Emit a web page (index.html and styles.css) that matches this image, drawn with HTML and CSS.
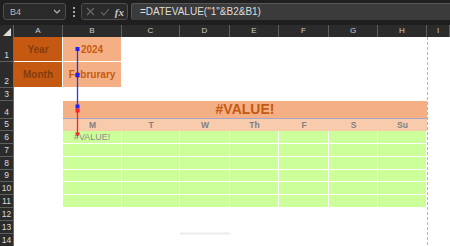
FILE: index.html
```html
<!DOCTYPE html>
<html lang="en">
<head>
    <meta charset="UTF-8">
    <meta name="viewport" content="width=device-width, initial-scale=1.0">
    <title>Calendar sheet</title>
    <link rel="stylesheet" href="styles.css">
</head>
<body>
    <div class="toolbar">
        <div class="name-box">
            <span>B4</span>
            <svg class="chevron" width="8" height="5" viewBox="0 0 8 5"><path d="M1 1 L4 4 L7 1" fill="none" stroke="#b8b8b8" stroke-width="1.1"/></svg>
        </div>
        <div class="grip"><i></i><i></i><i></i></div>
        <div class="fx-box">
            <svg width="9" height="9" viewBox="0 0 9 9"><path d="M1 1 L8 8 M8 1 L1 8" stroke="#6c6c6c" stroke-width="1.1"/></svg>
            <svg width="10" height="8" viewBox="0 0 10 8"><path d="M1 4.2 L3.8 7 L9 1" fill="none" stroke="#6c6c6c" stroke-width="1.1"/></svg>
            <span class="fx">fx</span>
        </div>
        <div class="formula">=DATEVALUE("1"&amp;B2&amp;B1)</div>
    </div>

    <div class="sheet">
        <div class="row head">
            <div class="corner"><svg width="8" height="8" viewBox="0 0 8 8"><path d="M8 0 L8 8 L0 8 Z" fill="#dcdcdc"/></svg></div>
            <div class="ch">A</div>
            <div class="ch">B</div>
            <div class="ch">C</div>
            <div class="ch">D</div>
            <div class="ch">E</div>
            <div class="ch">F</div>
            <div class="ch">G</div>
            <div class="ch">H</div>
            <div class="ch">I</div>
        </div>
        <div class="row r1">
            <div class="rh">1</div>
            <div class="cell label">Year</div>
            <div class="cell value">2024</div>
        </div>
        <div class="row r2">
            <div class="rh">2</div>
            <div class="cell label">Month</div>
            <div class="cell value">Februrary</div>
        </div>
        <div class="row r3">
            <div class="rh">3</div>
        </div>
        <div class="row r4">
            <div class="rh">4</div>
            <div></div>
            <div class="title">#VALUE!</div>
        </div>
        <div class="row r5">
            <div class="rh">5</div>
            <div></div>
            <div class="day">M</div>
            <div class="day">T</div>
            <div class="day">W</div>
            <div class="day">Th</div>
            <div class="day">F</div>
            <div class="day">S</div>
            <div class="day">Su</div>
        </div>
        <div class="row r6">
            <div class="rh">6</div>
            <div></div>
            <div class="g err">#VALUE!</div><div class="g"></div><div class="g"></div><div class="g"></div><div class="g"></div><div class="g"></div><div class="g"></div>
        </div>
        <div class="row r7">
            <div class="rh">7</div>
            <div></div>
            <div class="g"></div><div class="g"></div><div class="g"></div><div class="g"></div><div class="g"></div><div class="g"></div><div class="g"></div>
        </div>
        <div class="row r8">
            <div class="rh">8</div>
            <div></div>
            <div class="g"></div><div class="g"></div><div class="g"></div><div class="g"></div><div class="g"></div><div class="g"></div><div class="g"></div>
        </div>
        <div class="row r9">
            <div class="rh">9</div>
            <div></div>
            <div class="g"></div><div class="g"></div><div class="g"></div><div class="g"></div><div class="g"></div><div class="g"></div><div class="g"></div>
        </div>
        <div class="row r10">
            <div class="rh">10</div>
            <div></div>
            <div class="g"></div><div class="g"></div><div class="g"></div><div class="g"></div><div class="g"></div><div class="g"></div><div class="g"></div>
        </div>
        <div class="row r11">
            <div class="rh">11</div>
            <div></div>
            <div class="g"></div><div class="g"></div><div class="g"></div><div class="g"></div><div class="g"></div><div class="g"></div><div class="g"></div>
        </div>
        <div class="row r12">
            <div class="rh">12</div>
        </div>
        <div class="row r13">
            <div class="rh">13</div>
        </div>
        <div class="row r14">
            <div class="rh">14</div>
        </div>

        <!-- trace arrows and page break drawn over the grid -->
        <svg class="overlay" width="450" height="222" viewBox="0 0 450 222">
            <line x1="427.5" y1="12" x2="427.5" y2="222" stroke="#b4b4b4" stroke-width="1" stroke-dasharray="3 2"/>
            <line x1="180" y1="208.5" x2="230" y2="208.5" stroke="#ececec" stroke-width="2"/>
            <line x1="77.5" y1="24" x2="77.5" y2="82" stroke="#3030ff" stroke-width="1.3"/>
            <rect x="75.5" y="22" width="4" height="4" fill="#2020ff"/>
            <rect x="75.5" y="48" width="4" height="4" fill="#2020ff"/>
            <rect x="75.5" y="79.5" width="4" height="4" fill="#2020ff"/>
            <line x1="77.5" y1="84" x2="77.5" y2="108" stroke="#ff2020" stroke-width="1.3"/>
            <rect x="75.5" y="83.5" width="4" height="4" fill="#ff2020"/>
            <path d="M75 107.5 L80 107.5 L77.5 112 Z" fill="#ff2020"/>
        </svg>
    </div>
</body>
</html>
```

FILE: styles.css
```css
* {
    box-sizing: border-box;
}

body {
    margin: 0;
    width: 450px;
    height: 246px;
    overflow: hidden;
    background: #ffffff;
    font-family: "Liberation Sans", Arial, sans-serif;
}

/* formula bar */
.toolbar {
    height: 25px;
    background: #1f1f1f;
    display: flex;
    align-items: flex-start;
    padding-top: 3px;
}

.name-box {
    margin-left: 3px;
    width: 63px;
    height: 17px;
    border: 1px solid #4e4e4e;
    border-radius: 3px;
    background: #2a2a2a;
    display: flex;
    align-items: center;
    justify-content: space-between;
    padding: 0 4px 0 6px;
    color: #b8b8b8;
    font-size: 9px;
}

.grip {
    width: 15px;
    height: 17px;
    display: flex;
    flex-direction: column;
    align-items: center;
    justify-content: center;
    gap: 2px;
}

.grip i {
    width: 2px;
    height: 2px;
    background: #a8a8a8;
}

.fx-box {
    width: 47px;
    height: 17px;
    border: 1px solid #4e4e4e;
    border-radius: 3px;
    background: #2a2a2a;
    display: flex;
    align-items: center;
    justify-content: space-between;
    padding: 0 3px 0 4px;
}

.fx {
    font-family: "Liberation Serif", serif;
    font-style: italic;
    font-weight: bold;
    font-size: 11px;
    color: #c8c8c8;
}

.formula {
    margin-left: 3px;
    flex: 1;
    height: 17px;
    background: #3b3b3b;
    border-top: 1px solid #575757;
    border-left: 1px solid #575757;
    border-radius: 3px 0 0 3px;
    color: #dedede;
    font-size: 10px;
    line-height: 15px;
    padding-left: 8px;
}

/* grid */
.sheet {
    position: relative;
}

.row {
    display: grid;
    grid-template-columns: 14px 49px 59px 58px 50px 49px 50px 49px 49px 23px;
}

.head { height: 12px; }
.r1 { height: 25px; }
.r2 { height: 26px; }
.r3 { height: 13px; }
.r4 { height: 18px; }
.r5 { height: 12px; }
.r6, .r7, .r8, .r10, .r11, .r12, .r13, .r14 { height: 13px; }
.r9 { height: 12px; }

.corner {
    background: #2b2b2b;
    border-right: 1px solid #5e5e5e;
    display: flex;
    align-items: flex-end;
    justify-content: flex-end;
    padding: 0 2px 1px 0;
}

.ch {
    background: #2b2b2b;
    color: #cdcdcd;
    border-right: 1px solid #5e5e5e;
    font-size: 8px;
    line-height: 12px;
    text-align: center;
}

.rh {
    background: #2b2b2b;
    color: #dcdcdc;
    border-bottom: 1px solid #5e5e5e;
    border-right: 1px solid #6a6a6a;
    font-size: 8.5px;
    display: flex;
    align-items: flex-end;
    justify-content: center;
    padding-bottom: 1px;
}

.cell {
    display: flex;
    align-items: center;
    justify-content: center;
    font-weight: bold;
    font-size: 10px;
    border-right: 1px solid #ffffff;
    border-bottom: 1px solid #ffffff;
}

.label {
    background: #c65911;
    color: #843c0c;
}

.value {
    background: #f4b084;
    color: #c65911;
}

.title {
    grid-column: span 7;
    background: #f4b084;
    color: #c65911;
    border-bottom: 1px solid #a7a5c6;
    font-weight: bold;
    font-size: 14px;
    line-height: 17px;
    text-align: center;
}

.day {
    background: #f8cbad;
    color: #808080;
    font-weight: bold;
    font-size: 8.5px;
    line-height: 12px;
    text-align: center;
}

.g {
    background: #ccff99;
    border-right: 1px solid #ffffff;
    border-bottom: 1px solid #ffffff;
}

.err {
    color: #8c8c8c;
    font-size: 9px;
    line-height: 12px;
    padding-left: 11px;
}

.overlay {
    position: absolute;
    top: 0;
    left: 0;
}
```
